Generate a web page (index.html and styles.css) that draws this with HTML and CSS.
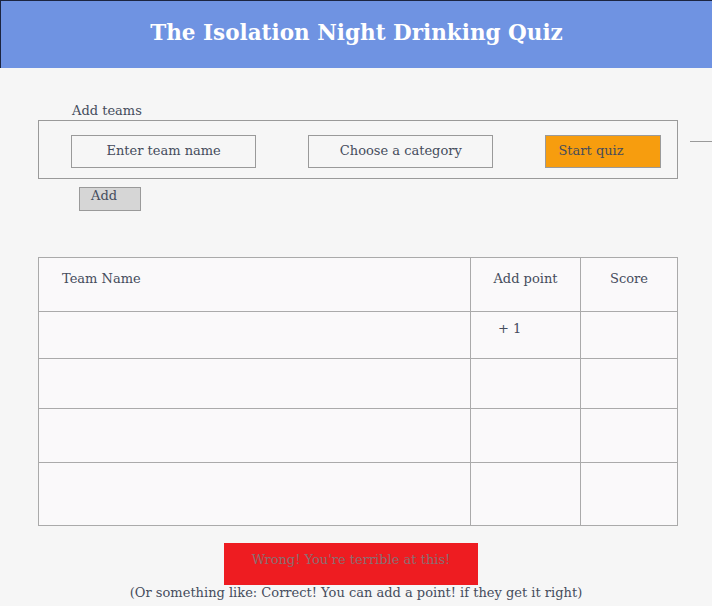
FILE: index.html
```html
<!DOCTYPE html>
<html>
<head>
<meta charset="utf-8">
<link rel="stylesheet" href="styles.css">
</head>
<body>
<header class="top">
  <h1 class="title">The Isolation Night Drinking Quiz</h1>
</header>
<main class="main">
  <div class="label">Add teams</div>
  <div class="box-row">
    <div class="box">
      <div class="field">Enter team name</div>
      <div class="field">Choose a category</div>
      <div class="start">Start quiz</div>
    </div>
    <div class="dash"></div>
  </div>
  <div class="add">Add</div>
  <table class="scores">
    <tr class="r-head">
      <th class="c-name">Team Name</th>
      <th class="c-add">Add point</th>
      <th class="c-score">Score</th>
    </tr>
    <tr class="r1"><td></td><td class="plus">+ 1</td><td></td></tr>
    <tr class="r2"><td></td><td></td><td></td></tr>
    <tr class="r3"><td></td><td></td><td></td></tr>
    <tr class="r4"><td></td><td></td><td></td></tr>
  </table>
  <div class="wrong">Wrong! You're terrible at this!</div>
  <p class="note">(Or something like: Correct! You can add a point! if they get it right)</p>
</main>
</body>
</html>
```
FILE: styles.css
```css
* { box-sizing: border-box; }
body {
  margin: 0;
  background: #f6f6f6;
  font-family: "DejaVu Serif", serif;
  color: #454c5c;
  font-size: 13px;
}
.top {
  height: 68px;
  background: #6f93e2;
  border-top: 1px solid #1c2540;
  border-left: 1px solid #1c2540;
  display: flex;
  align-items: center;
  justify-content: center;
}
.title {
  margin: 0;
  color: #fff;
  font-size: 21.5px;
  font-weight: bold;
  padding-bottom: 4px;
}
.main {
  padding-left: 38px;
  padding-top: 34px;
}
.label {
  margin-left: 34px;
  height: 18px;
  line-height: 18px;
}
.box-row {
  display: flex;
  align-items: flex-start;
}
.box {
  width: 640px;
  height: 59px;
  border: 1px solid #9a9a9a;
  display: flex;
  align-items: flex-start;
  padding: 14px 16px 0 32px;
  gap: 52px;
}
.dash {
  margin-left: 12px;
  margin-top: 21px;
  width: 22px;
  height: 1px;
  background: #9a9a9a;
}
.field {
  width: 186px;
  height: 33px;
  border: 1px solid #9a9a9a;
  display: flex;
  align-items: center;
  justify-content: center;
  padding-bottom: 2px;
}
.start {
  width: 116px;
  height: 33px;
  border: 1px solid #9a9a9a;
  background: #f79d0e;
  padding: 0 0 2px 12px;
  display: flex;
  align-items: center;
}
.add {
  margin: 8px 0 0 41px;
  width: 62px;
  height: 24px;
  border: 1px solid #9a9a9a;
  background: #d6d6d6;
  padding: 0 0 0 11px;
}
.scores {
  margin-top: 46px;
  width: 640px;
  border-collapse: collapse;
  background: #faf9fa;
  border: 1px solid #9a9a9a;
}
.scores th, .scores td {
  border: 1px solid #aaaaaa;
  padding: 0;
  font-weight: normal;
  vertical-align: top;
}
.c-name { width: 432px; text-align: left; padding: 13px 0 0 23px !important; }
.c-add { width: 110px; text-align: center; padding-top: 13px !important; }
.c-score { text-align: center; padding-top: 13px !important; }
.r-head { height: 54px; }
.r1 { height: 47px; }
.r2 { height: 50px; }
.r3 { height: 54px; }
.r4 { height: 63px; }
.plus { padding: 9px 0 0 27px !important; }
.wrong {
  margin: 17px 0 0 186px;
  width: 254px;
  height: 42px;
  background: #ee1c21;
  color: #8a6f72;
  display: flex;
  align-items: center;
  justify-content: center;
  padding-bottom: 10px;
  font-size: 13px;
}
.note {
  margin: 0 0 0 -38px;
  text-align: center;
  font-size: 13px;
  color: #454c5c;
}
```
